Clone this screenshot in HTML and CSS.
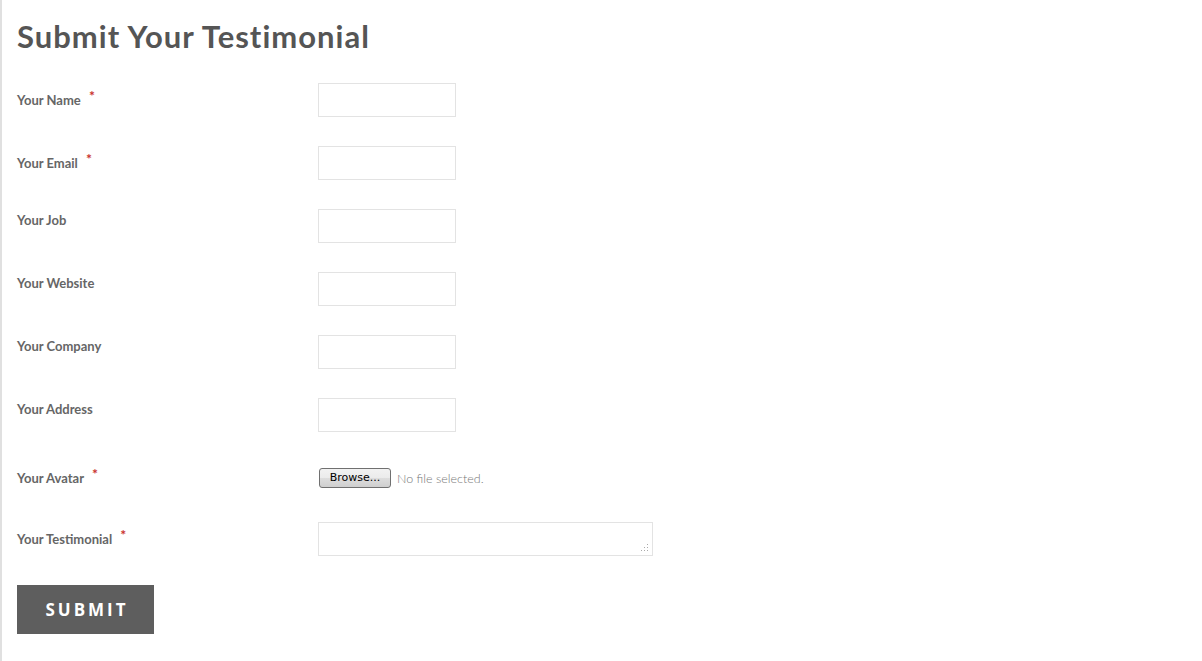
FILE: index.html
```html
<!DOCTYPE html>
<html>
<head>
<meta charset="utf-8">
<link rel="stylesheet" href="styles.css">
</head>
<body>
<div class="page">
  <h1 class="title">Submit Your Testimonial</h1>
  <form class="form">
    <div class="row">
      <label class="label req">Your Name <span class="star">*</span></label>
      <input class="field" type="text">
    </div>
    <div class="row">
      <label class="label req">Your Email <span class="star">*</span></label>
      <input class="field" type="text">
    </div>
    <div class="row">
      <label class="label">Your Job</label>
      <input class="field" type="text">
    </div>
    <div class="row">
      <label class="label">Your Website</label>
      <input class="field" type="text">
    </div>
    <div class="row">
      <label class="label">Your Company</label>
      <input class="field" type="text">
    </div>
    <div class="row">
      <label class="label">Your Address</label>
      <input class="field" type="text">
    </div>
    <div class="row row-file">
      <label class="label req">Your Avatar <span class="star">*</span></label>
      <div class="file">
        <button type="button" class="browse">Browse...</button>
        <span class="nofile">No file selected.</span>
      </div>
    </div>
    <div class="row">
      <label class="label req">Your Testimonial <span class="star">*</span></label>
      <textarea class="area"></textarea>
    </div>
    <button type="button" class="submit">Submit</button>
  </form>
</div>
</body>
</html>
```

FILE: styles.css
```css
html, body {
  margin: 0;
  padding: 0;
  background: #fff;
}
.page {
  border-left: 2px solid #e0e0e0;
  min-height: 661px;
  box-sizing: border-box;
  padding: 18px 15px 0 15px;
  font-family: Lato, "Open Sans", sans-serif;
}
.title {
  margin: 0 0 29px 0;
  font-size: 31px;
  line-height: 36px;
  font-weight: 700;
  letter-spacing: 1px;
  color: #555;
}
.form {
  display: flex;
  flex-direction: column;
}
.row {
  display: grid;
  grid-template-columns: 301px auto;
  align-items: start;
  margin-bottom: 29px;
}
.label {
  font-size: 13px;
  font-weight: 700;
  color: #666;
  line-height: 20px;
  padding-top: 1px;
}
.label.req {
  padding-top: 7px;
}
.star {
  color: #c9302c;
  font-size: 14px;
  position: relative;
  top: -4px;
  margin-left: 5px;
}
.field {
  width: 138px;
  height: 34px;
  box-sizing: border-box;
  border: 1px solid #e3e3e3;
  background: #fff;
  margin: 0;
  padding: 4px 6px;
  outline: none;
}
.row-file {
  height: 32px;
}
.file {
  display: flex;
  align-items: center;
  gap: 6px;
  padding-top: 7px;
}
.browse {
  width: 72px;
  height: 20px;
  margin: 0 0 0 1px;
  padding: 0;
  box-sizing: border-box;
  border: 1px solid #707070;
  border-radius: 3px;
  background: linear-gradient(#f2f2f2, #ebebeb 50%, #dddddd 51%, #cfcfcf);
  font-family: "DejaVu Sans", "Liberation Sans", sans-serif;
  font-size: 11px;
  color: #000;
  line-height: 18px;
}
.nofile {
  font-family: Lato, sans-serif;
  font-weight: 300;
  font-size: 12.5px;
  color: #777;
}
.area {
  width: 335px;
  height: 34px;
  box-sizing: border-box;
  border: 1px solid #e3e3e3;
  margin: 0;
  padding: 4px;
  resize: none;
  outline: none;
  background:
    radial-gradient(circle, #aaa 0.8px, transparent 1px) right 3px bottom 3px / 3px 3px no-repeat,
    radial-gradient(circle, #aaa 0.8px, transparent 1px) right 6px bottom 3px / 3px 3px no-repeat,
    radial-gradient(circle, #aaa 0.8px, transparent 1px) right 9px bottom 3px / 3px 3px no-repeat,
    radial-gradient(circle, #aaa 0.8px, transparent 1px) right 3px bottom 6px / 3px 3px no-repeat,
    radial-gradient(circle, #aaa 0.8px, transparent 1px) right 6px bottom 6px / 3px 3px no-repeat,
    radial-gradient(circle, #aaa 0.8px, transparent 1px) right 3px bottom 9px / 3px 3px no-repeat,
    #fff;
}
.submit {
  align-self: flex-start;
  width: 137px;
  height: 49px;
  border: none;
  margin: 0;
  padding: 0;
  background: #5e5e5e;
  color: #fff;
  font-family: "Open Sans", sans-serif;
  font-weight: 700;
  font-size: 17px;
  letter-spacing: 3px;
  text-transform: uppercase;
  text-indent: 3px;
}
```
